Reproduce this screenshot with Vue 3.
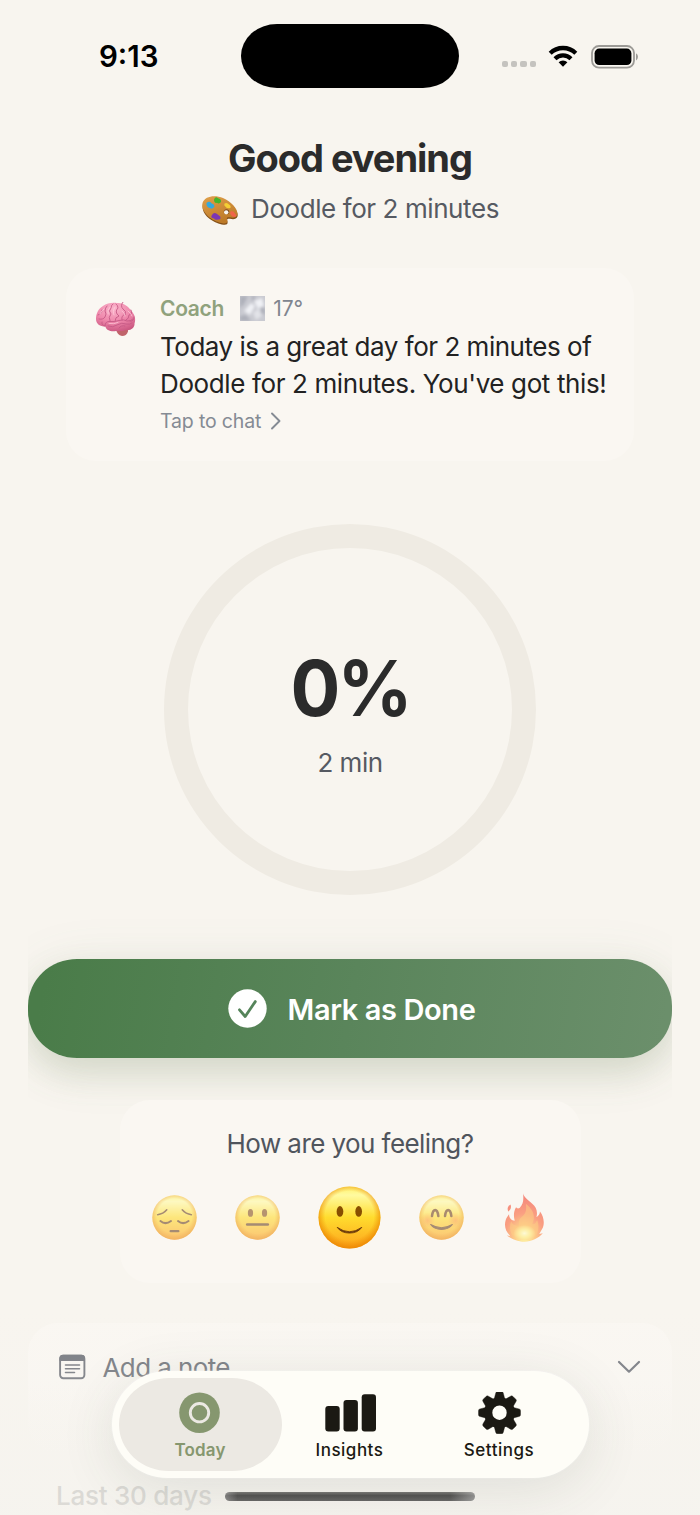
<script setup>
const tabs = [
  { id: 'today', label: 'Today' },
  { id: 'insights', label: 'Insights' },
  { id: 'settings', label: 'Settings' },
]
const teeth = [0, 45, 90, 135, 180, 225, 270, 315]
const moods = ['sad', 'neutral', 'smile', 'happy', 'fire']
</script>

<template>
  <div class="screen">
    <header class="status">
      <div class="time">9:13</div>
      <div class="island"></div>
      <div class="signals">
        <div class="dots"><i v-for="n in 4" :key="n"></i></div>
        <svg class="wifi" width="30" height="22" viewBox="0 0 30 22">
          <g fill="none" stroke="#000" stroke-width="4.300">
            <path d="M2.200 8.200a18.400 18.400 0 0 1 25.600 0" />
            <path d="M7 13.700a11.500 11.500 0 0 1 16 0" />
          </g>
          <path d="M15 21.800l-4.400-4.500a6.300 6.300 0 0 1 8.800 0z" fill="#000" />
        </svg>
        <svg class="battery" width="48" height="24" viewBox="0 0 48 24">
          <rect x="1" y="1" width="42" height="21.600" rx="7" fill="none" stroke="#9c9a96" stroke-width="1.800" />
          <rect x="3.600" y="3.600" width="36.800" height="16.400" rx="4.600" fill="#000" />
          <path d="M45 8.200q2 1.200 2 3.600t-2 3.600z" fill="#9c9a96" />
        </svg>
      </div>
    </header>

    <h1 class="greeting">Good evening</h1>
    <div class="habit">
      <svg class="palette" width="38" height="30" viewBox="0 0 38 30">
        <defs>
          <linearGradient id="wood" x1="0" y1="0" x2="0.4" y2="1">
            <stop offset="0" stop-color="#e0a04a" /><stop offset="1" stop-color="#bd7a28" />
          </linearGradient>
        </defs>
        <path d="M2 9C4 2 14 .5 22 4.200C31 8 38 16.500 36.500 21.500c-1 3-4.500 3-7.500 2.300-2.200-.5-3.500.4-2.700 2.300 1 2.500-.4 4.200-3.800 3.600C13 28.500-1 19.500 2 9z" fill="#855018" />
        <path d="M1.600 7.800C4 .8 14-.4 22 3c9 3.800 15.600 12 14.300 17-1 3-4.500 3-7.500 2.300-2.200-.5-3.500.4-2.700 2.300 1 2.500-.4 4.200-3.800 3.800C13 27.400-1 18.100 1.600 7.800z" fill="url(#wood)" />
        <ellipse cx="25.500" cy="16.800" rx="2.700" ry="2.500" fill="#7d491c" />
        <ellipse cx="25.200" cy="17.300" rx="2.200" ry="2.100" fill="#f8f5ef" />
        <path d="M5.500 8q3-2.500 5 .2 3 1 3 3.300-2 3.200-4.500 1.600-4-1-3.500-5.100z" fill="#35a9dd" />
        <path d="M13 4.500q1.500-3.500 4-1.300 3.500.5 3 3.800-2 2.500-4 .8-3 .6-3-3.300z" fill="#45b52c" />
        <path d="M23.500 8.500q2.500-1.500 4.500 1 2.500 1.500 1.300 3.500-3 1-4.800-1.200-2-1.300-1-3.300z" fill="#f4cf35" />
        <path d="M29.500 16.500q3-1 4.500 2 2.500 2.500 0 3.500-3 .2-4-2-1.600-1.700-.5-3.500z" fill="#f0644a" />
        <path d="M11 20q2-3.500 4.700-1.200l3.500 2.700q1.200 3.200-2 3-3 1-4.200-1-4-.5-2-3.500z" fill="#7b35b5" />
      </svg>
      <span>Doodle for 2 minutes</span>
    </div>

    <section class="coach">
      <svg class="brain" width="42" height="36" viewBox="0 0 42 36">
        <defs>
          <radialGradient id="brainFill" cx=".45" cy=".2" r=".85">
            <stop offset="0" stop-color="#fbb5cc" /><stop offset=".55" stop-color="#ee86aa" /><stop offset="1" stop-color="#c9557f" />
          </radialGradient>
        </defs>
        <path d="M21 27q3-3 9-1.500 3.500 1 3 4-1.500 4.500-6 4.500-5-1-6-7z" fill="#c0646b" />
        <path d="M1 17C1 12 3 7 8 4 12 1 17 .5 22 1c6-.5 11 3 14 7.500 4 4 5 9 3.500 13 .5 4-4 7.500-8.500 6.500-4 1.500-7 1-10 1-5 .8-10-.5-10.500-4.500C5 24.500 1 22 1 17z" fill="url(#brainFill)" />
        <g fill="none" stroke="#c65a86" stroke-width=".9" stroke-linecap="round">
          <path d="M10 24q0-5 5-4.500 5 .5 9-1 5-1.500 8 .5 4 .5 6-2" />
          <path d="M3 13q4-1 4-5m-3 9q4 1 6-2t0-6q0-3 2-5M10 24q-4-1-3-4m8-1q-2-4 1-7-3-3 0-6 0-3 2-4m2 17q0-4 4-5-5-4-1-8 0-3-2-4m6 16q-1-5 3-5 2-4-2-6-3-3 0-7m3 18q3-1 3-5 4-1 2-5m-1 11q4 1 4-4M13 24q5 2 9-1 5-3 9-1 4 1 6-1m-13 5q2-3 6-2" />
        </g>
        <g fill="none" stroke="#ffd2e0" stroke-width=".9" stroke-linecap="round" opacity=".75">
          <path d="M5 12q2-4 4-5m4 5q-1-4 2-7m4 8q-2-3 1-8m7 4q3 2 3 5m3-5q3 2 4 5M14 21.500q5 1 9-1" />
        </g>
      </svg>
      <div class="coach-body">
        <div class="coach-head">
          <b>Coach</b>
          <svg class="cloud" width="25" height="25" viewBox="0 0 25 25">
            <defs>
              <filter id="soft" x="-20%" y="-20%" width="140%" height="140%"><feGaussianBlur stdDeviation="1.700" /></filter>
              <clipPath id="sq"><rect width="25" height="25" /></clipPath>
            </defs>
            <g clip-path="url(#sq)">
              <rect width="25" height="25" fill="#c9cad1" />
              <g filter="url(#soft)">
                <path d="M4 15l7-8 4 3-5 9zM14 5l8-3 2 8-6 3z" fill="#f0f1f5" />
                <path d="M13 17l6-5 3 8-6 4z" fill="#e2e3e8" />
                <path d="M0 0h8L4 8 0 12zM0 20l6-1 5 6H0zM20 11l5 1v7l-4-2zM11 0h5l-3 6z" fill="#aeb0ba" />
              </g>
            </g>
          </svg>
          <span class="temp">17°</span>
        </div>
        <p class="message"><span class="l1">Today is a great day for 2 minutes of</span><br /><span class="l2">Doodle for 2 minutes. You've got this!</span></p>
        <div class="chat">
          <span>Tap to chat</span>
          <svg width="12" height="18" viewBox="0 0 12 18"><path d="M2 1.500l7.500 7.500L2 16.500" fill="none" stroke="#858b94" stroke-width="1.900" stroke-linecap="round" stroke-linejoin="round" /></svg>
        </div>
      </div>
    </section>

    <section class="ring">
      <div class="percent">0%</div>
      <div class="minutes">2 min</div>
    </section>

    <div class="action-wrap">
      <button class="action">
        <svg width="39" height="39" viewBox="0 0 39 39">
          <circle cx="19.500" cy="19.500" r="19.200" fill="#fff" />
          <path d="M11.500 20.800l5.700 6.700L27.300 12.600" fill="none" stroke="#55845a" stroke-width="2.800" stroke-linecap="round" stroke-linejoin="round" />
        </svg>
        <span>Mark as Done</span>
      </button>
    </div>

    <section class="feeling">
      <h2>How are you feeling?</h2>
      <div class="moods">
        <svg v-for="m in moods" :key="m" :class="['mood', m]" viewBox="0 0 64 64">
          <defs>
            <linearGradient :id="'face-' + m" x1="0" y1="0" x2="0" y2="1">
              <stop offset="0" stop-color="#fff36b" /><stop offset=".14" stop-color="#fffaa0" /><stop offset=".5" stop-color="#ffdc2e" /><stop offset="1" stop-color="#fda31c" />
            </linearGradient>
            <radialGradient :id="'rim-' + m" cx=".5" cy=".47" r=".53">
              <stop offset=".74" stop-color="#ee8a00" stop-opacity="0" /><stop offset="1" stop-color="#e98200" stop-opacity=".8" />
            </radialGradient>
            <radialGradient :id="'blush-' + m">
              <stop offset="0" stop-color="#ff6b2f" stop-opacity=".5" /><stop offset="1" stop-color="#ff6b2f" stop-opacity="0" />
            </radialGradient>
            <radialGradient :id="'flame-' + m" cx=".5" cy=".92" r=".85">
              <stop offset="0" stop-color="#fff36b" /><stop offset=".3" stop-color="#ffb044" /><stop offset=".6" stop-color="#fa6638" /><stop offset="1" stop-color="#f2402f" />
            </radialGradient>
            <radialGradient :id="'glow-' + m">
              <stop offset="0" stop-color="#fffcc4" /><stop offset=".5" stop-color="#fff27a" stop-opacity=".8" /><stop offset="1" stop-color="#fff27a" stop-opacity="0" />
            </radialGradient>
          </defs>
          <template v-if="m !== 'fire'">
            <circle cx="32" cy="32" r="31.500" :fill="`url(#face-${m})`" />
            <circle cx="32" cy="32" r="31.500" :fill="`url(#rim-${m})`" />
          </template>
          <g v-if="m === 'smile'">
            <ellipse cx="22.300" cy="25.800" rx="3.400" ry="5.400" fill="#884e00" />
            <ellipse cx="41.300" cy="25.800" rx="3.400" ry="5.400" fill="#884e00" />
            <path d="M19.500 42q12.500 9 25 0-4 5.800-12.500 5.800T19.500 42z" fill="#69370a" stroke="#69370a" stroke-width=".9" stroke-linejoin="round" />
          </g>
          <g v-else-if="m === 'neutral'">
            <ellipse cx="22" cy="25.500" rx="3.700" ry="5.500" fill="#8a5319" />
            <ellipse cx="42" cy="25.500" rx="3.700" ry="5.500" fill="#8a5319" />
            <rect x="15.500" y="40" width="33" height="3.600" rx="1.800" fill="#6e4420" />
          </g>
          <g v-else-if="m === 'sad'" fill="none" stroke="#6e4420" stroke-width="2.800" stroke-linecap="round">
            <path d="M8 28q8-1 13-7M56 28q-8-1-13-7" stroke-width="2.200" />
            <path d="M12 37q7 6 15 0M37 37q7 6 15 0" />
            <path d="M26.500 51.500h11" stroke-width="3.200" />
          </g>
          <g v-else-if="m === 'happy'">
            <circle cx="12" cy="36" r="11" :fill="`url(#blush-${m})`" />
            <circle cx="52" cy="36" r="11" :fill="`url(#blush-${m})`" />
            <g fill="none" stroke="#744519" stroke-width="3.600" stroke-linecap="round"><path d="M18.500 30q1-8.500 4.500-8.500t4.500 8.500M37 30q1-8.500 4.500-8.500t4.500 8.500" /></g>
            <path d="M16.500 42q15.500 9 31 0-5 7-15.500 7t-15.500-7z" fill="#6e4420" stroke="#6e4420" stroke-width="1.500" stroke-linejoin="round" />
          </g>
          <g v-else transform="translate(0 -1.500)">
            <path d="M30-1c1 6 7 9 13 15 6 5 8 11 6 19 3-2 5-4 5-8 6 8 7 18 3 25l-4 7 5-1C52 63 42 68 32 68S12 63 7 59l5 1C5 53 3 46 5 38c1-4 3-6 5-9 0 6 4 9 8 9-2-8-1-14 2-19 2 2 3 2 5 1 5-5 6-10 5-21zM12 15c2 4 0 8-3 10-2-3-1-8 3-10z" :fill="`url(#flame-${m})`" />
            <path d="M34 14c11 9 14 18 9 29 4 0 5-2 7-6 5 13 0 29-18 29S8 52 13 39c2 5 6 7 11 6-1-8 2-11 6-14 4-4 5-9 4-17z" fill="#ffb33c" opacity=".55" />
            <ellipse cx="32" cy="56" rx="16" ry="12" :fill="`url(#glow-${m})`" />
          </g>
        </svg>
      </div>
    </section>

    <section class="note">
      <svg width="27" height="26" viewBox="0 0 27 26">
        <rect x="1.100" y="1.600" width="24.300" height="22.600" rx="3.200" fill="none" stroke="#74777e" stroke-width="1.900" />
        <path d="M.6 7V4.200Q.6.800 4 .8h18.500q3.400 0 3.400 3.400V7z" fill="#74777e" />
        <path d="M6.500 11h14M6.500 14.800h14M6.500 18.500h9" stroke="#74777e" stroke-width="1.600" stroke-linecap="round" />
      </svg>
      <span>Add a note</span>
      <svg class="chev" width="24" height="14" viewBox="0 0 24 14"><path d="M2 2l10 9.700L22 2" fill="none" stroke="#74777e" stroke-width="2.200" stroke-linecap="round" stroke-linejoin="round" /></svg>
    </section>

    <section class="history"><span>Last 30 days</span></section>

    <div class="fade"></div>

    <nav class="tabs">
      <div v-for="t in tabs" :key="t.id" :class="['tab', { active: t.id === 'today' }]">
        <svg v-if="t.id === 'today'" width="54" height="42" viewBox="0 0 54 42">
          <circle cx="26.500" cy="20.700" r="20.300" fill="#86976f" />
          <circle cx="26.500" cy="20.700" r="9.200" fill="none" stroke="#ece9e3" stroke-width="2.900" />
        </svg>
        <svg v-else-if="t.id === 'insights'" width="54" height="42" viewBox="0 0 54 42" fill="#1b1913">
          <rect x="2.300" y="14" width="14.400" height="25.500" rx="3" />
          <rect x="20.500" y="8" width="14.400" height="31.500" rx="3" />
          <rect x="38.700" y="2.200" width="14.300" height="37.300" rx="3" />
        </svg>
        <svg v-else width="54" height="42" viewBox="0 0 54 42">
          <g fill="#1b1913" transform="translate(27.500 20.700)">
            <path v-for="a in teeth" :key="a" :transform="`rotate(${a})`" d="M-5.500-13L-3.800-19.500Q-3.500-21-2-21H2Q3.500-21 3.800-19.500L5.500-13z" stroke="#1b1913" stroke-width=".4" />
            <circle r="11.300" fill="none" stroke="#1b1913" stroke-width="8.200" />
          </g>
        </svg>
        <span>{{ t.label }}</span>
      </div>
    </nav>
    <div class="home"></div>
  </div>
</template>

<style>
html, body { margin: 0; background: #f8f5ef; }
</style>

<style scoped>
.screen {
  position: relative;
  width: 700px;
  height: 1515px;
  overflow: hidden;
  background: #f8f5ef;
  font-family: Inter, "Liberation Sans", sans-serif;
  color: #2b2b2b;
  display: flex;
  flex-direction: column;
  align-items: center;
}
.screen > * { flex-shrink: 0; box-sizing: border-box; }
span, b { white-space: nowrap; }
.status {
  width: 700px;
  height: 112px;
  padding: 24px 61px 0 99px;
  display: grid;
  grid-template-columns: 142px 218px 1fr;
}
.time { font-size: 29.500px; font-weight: 600; line-height: 64px; color: #000; }
.island { height: 64px; border-radius: 36px / 32px; background: #000; }
.signals { display: flex; justify-content: flex-end; align-items: flex-start; padding-top: 21px; }
.dots { display: flex; gap: 3px; margin: 16px 12px 0 0; }
.dots i { width: 6.300px; height: 6.300px; border-radius: 2px; background: #c5c3bf; }
.wifi { margin: 0 13px 0 0; }
.greeting { margin: 22px 0 0; font-size: 38px; line-height: 48px; font-weight: 700; letter-spacing: -1.050px; }
.habit { display: flex; align-items: center; gap: 12px; height: 40px; margin-top: 6px; font-size: 26px; color: #565a62; letter-spacing: -.42px; }
.palette { margin-top: 3px; }
.coach {
  width: 568px;
  height: 193px;
  margin-top: 40px;
  padding: 24px 0 0 29px;
  border-radius: 30px;
  background: #faf7f2;
  display: flex;
  gap: 23px;
}
.brain { margin-top: 10px; }
.coach-head { display: flex; align-items: center; height: 32px; font-size: 21px; }
.coach-head b { font-weight: 600; color: #90a27d; letter-spacing: -.3px; }
.cloud { margin: 0 8px 0 16px; }
.temp { color: #80858f; }
.message { margin: 5px 0 0; font-size: 26px; line-height: 36.500px; color: #222; }
.l1 { letter-spacing: -.48px; }
.l2 { letter-spacing: -.38px; }
.chat { display: flex; align-items: center; gap: 9px; height: 37px; font-size: 19.500px; letter-spacing: -.15px; color: #858b94; }
.ring {
  width: 372px;
  height: 371px;
  margin-top: 63px;
  border: 24px solid #efebe3;
  border-radius: 50%;
  display: flex;
  flex-direction: column;
  align-items: center;
}
.percent { margin-top: 93px; font-size: 77px; line-height: 94px; font-weight: 700; letter-spacing: -3px; transform: scaleX(.96); }
.minutes { margin-top: 10px; font-size: 26px; line-height: 36px; color: #565a62; letter-spacing: -.5px; }
.action-wrap {
  width: 644px;
  height: 240px;
  margin-top: -5px;
  padding-top: 69px;
  overflow: hidden;
}
.action {
  width: 644px;
  height: 99px;
  padding: 0 0 0 3px;
  border: 0;
  border-radius: 49px / 47px;
  background: linear-gradient(100deg, #4a7c49 3%, #5a855b 50%, #6b8f6b 98%);
  box-shadow: 0 16px 32px rgba(134, 151, 111, .23), 0 8px 56px rgba(110, 140, 120, .11);
  display: flex;
  align-items: center;
  justify-content: center;
  gap: 21px;
  color: #fff;
  font: 600 29px Inter, sans-serif;
  letter-spacing: -.4px;
}
.action span { margin-top: 1px; }
.feeling {
  width: 461px;
  height: 183px;
  margin-top: -30px;
  padding-top: 26px;
  border-radius: 30px;
  background: #faf7f2;
  z-index: 1;
}
.feeling h2 { margin: 0; font-size: 26px; font-weight: 400; line-height: 36px; letter-spacing: -.57px; text-align: center; color: #50555d; }
.moods { display: grid; grid-template-columns: 44px 44px 62px 44px 44px; justify-content: center; column-gap: 39px; align-items: center; height: 66px; margin: 22px 3px 0 0; }
.mood { width: 45px; height: 45px; opacity: .6; overflow: visible; }
.mood.smile { width: 63px; height: 63px; opacity: 1; }
.note {
  width: 644px;
  height: 130px;
  margin-top: 40px;
  padding: 31px 31px 0 31px;
  border-radius: 30px;
  background: linear-gradient(#faf7f2 45%, #f8f5ef);
  display: flex;
  align-items: flex-start;
  font-size: 26px;
  line-height: 28px;
  letter-spacing: -.6px;
  color: #74777e;
}
.note span { margin-left: 16.500px; }
.chev { margin: 6px 0 0 auto; }
.history { width: 644px; margin-top: 25px; padding-left: 28px; font-size: 26px; line-height: 36px; font-weight: 500; letter-spacing: -.25px; color: #cbc9c4; }
.fade { position: absolute; left: 0; bottom: 0; width: 700px; height: 205px; background: linear-gradient(rgba(243, 242, 238, 0), rgba(243, 242, 238, .45)); z-index: 2; }
.tabs {
  position: absolute;
  z-index: 3;
  left: 111.500px;
  top: 1371px;
  width: 477px;
  height: 107px;
  padding: 7px;
  border-radius: 56px / 53.500px;
  background: #fefdf7;
  box-shadow: 0 10px 56px rgba(60, 70, 60, .12), 0 0 2px rgba(255, 255, 255, .9);
  display: grid;
  grid-template-columns: 163px 136px 163px;
}
.tab { height: 93px; border-radius: 50px / 46.500px; padding-top: 14px; box-sizing: border-box; display: flex; flex-direction: column; align-items: center; font-size: 17px; font-weight: 500; line-height: 24px; color: #1b1913; }
.tab span { margin-top: 4px; letter-spacing: .5px; }
.tab.active { background: #ece9e3; color: #86976f; font-weight: 600; }
.tab.active span { letter-spacing: .15px; }
.home { position: absolute; z-index: 3; left: 225px; top: 1492px; width: 250px; height: 9px; border-radius: 5px; background: linear-gradient(90deg, rgba(255,255,255,.25), rgba(255,255,255,0) 5%, rgba(255,255,255,0) 90%, rgba(255,255,255,.35)), linear-gradient(#777773, #51514f 40%, #666664); }
</style>
